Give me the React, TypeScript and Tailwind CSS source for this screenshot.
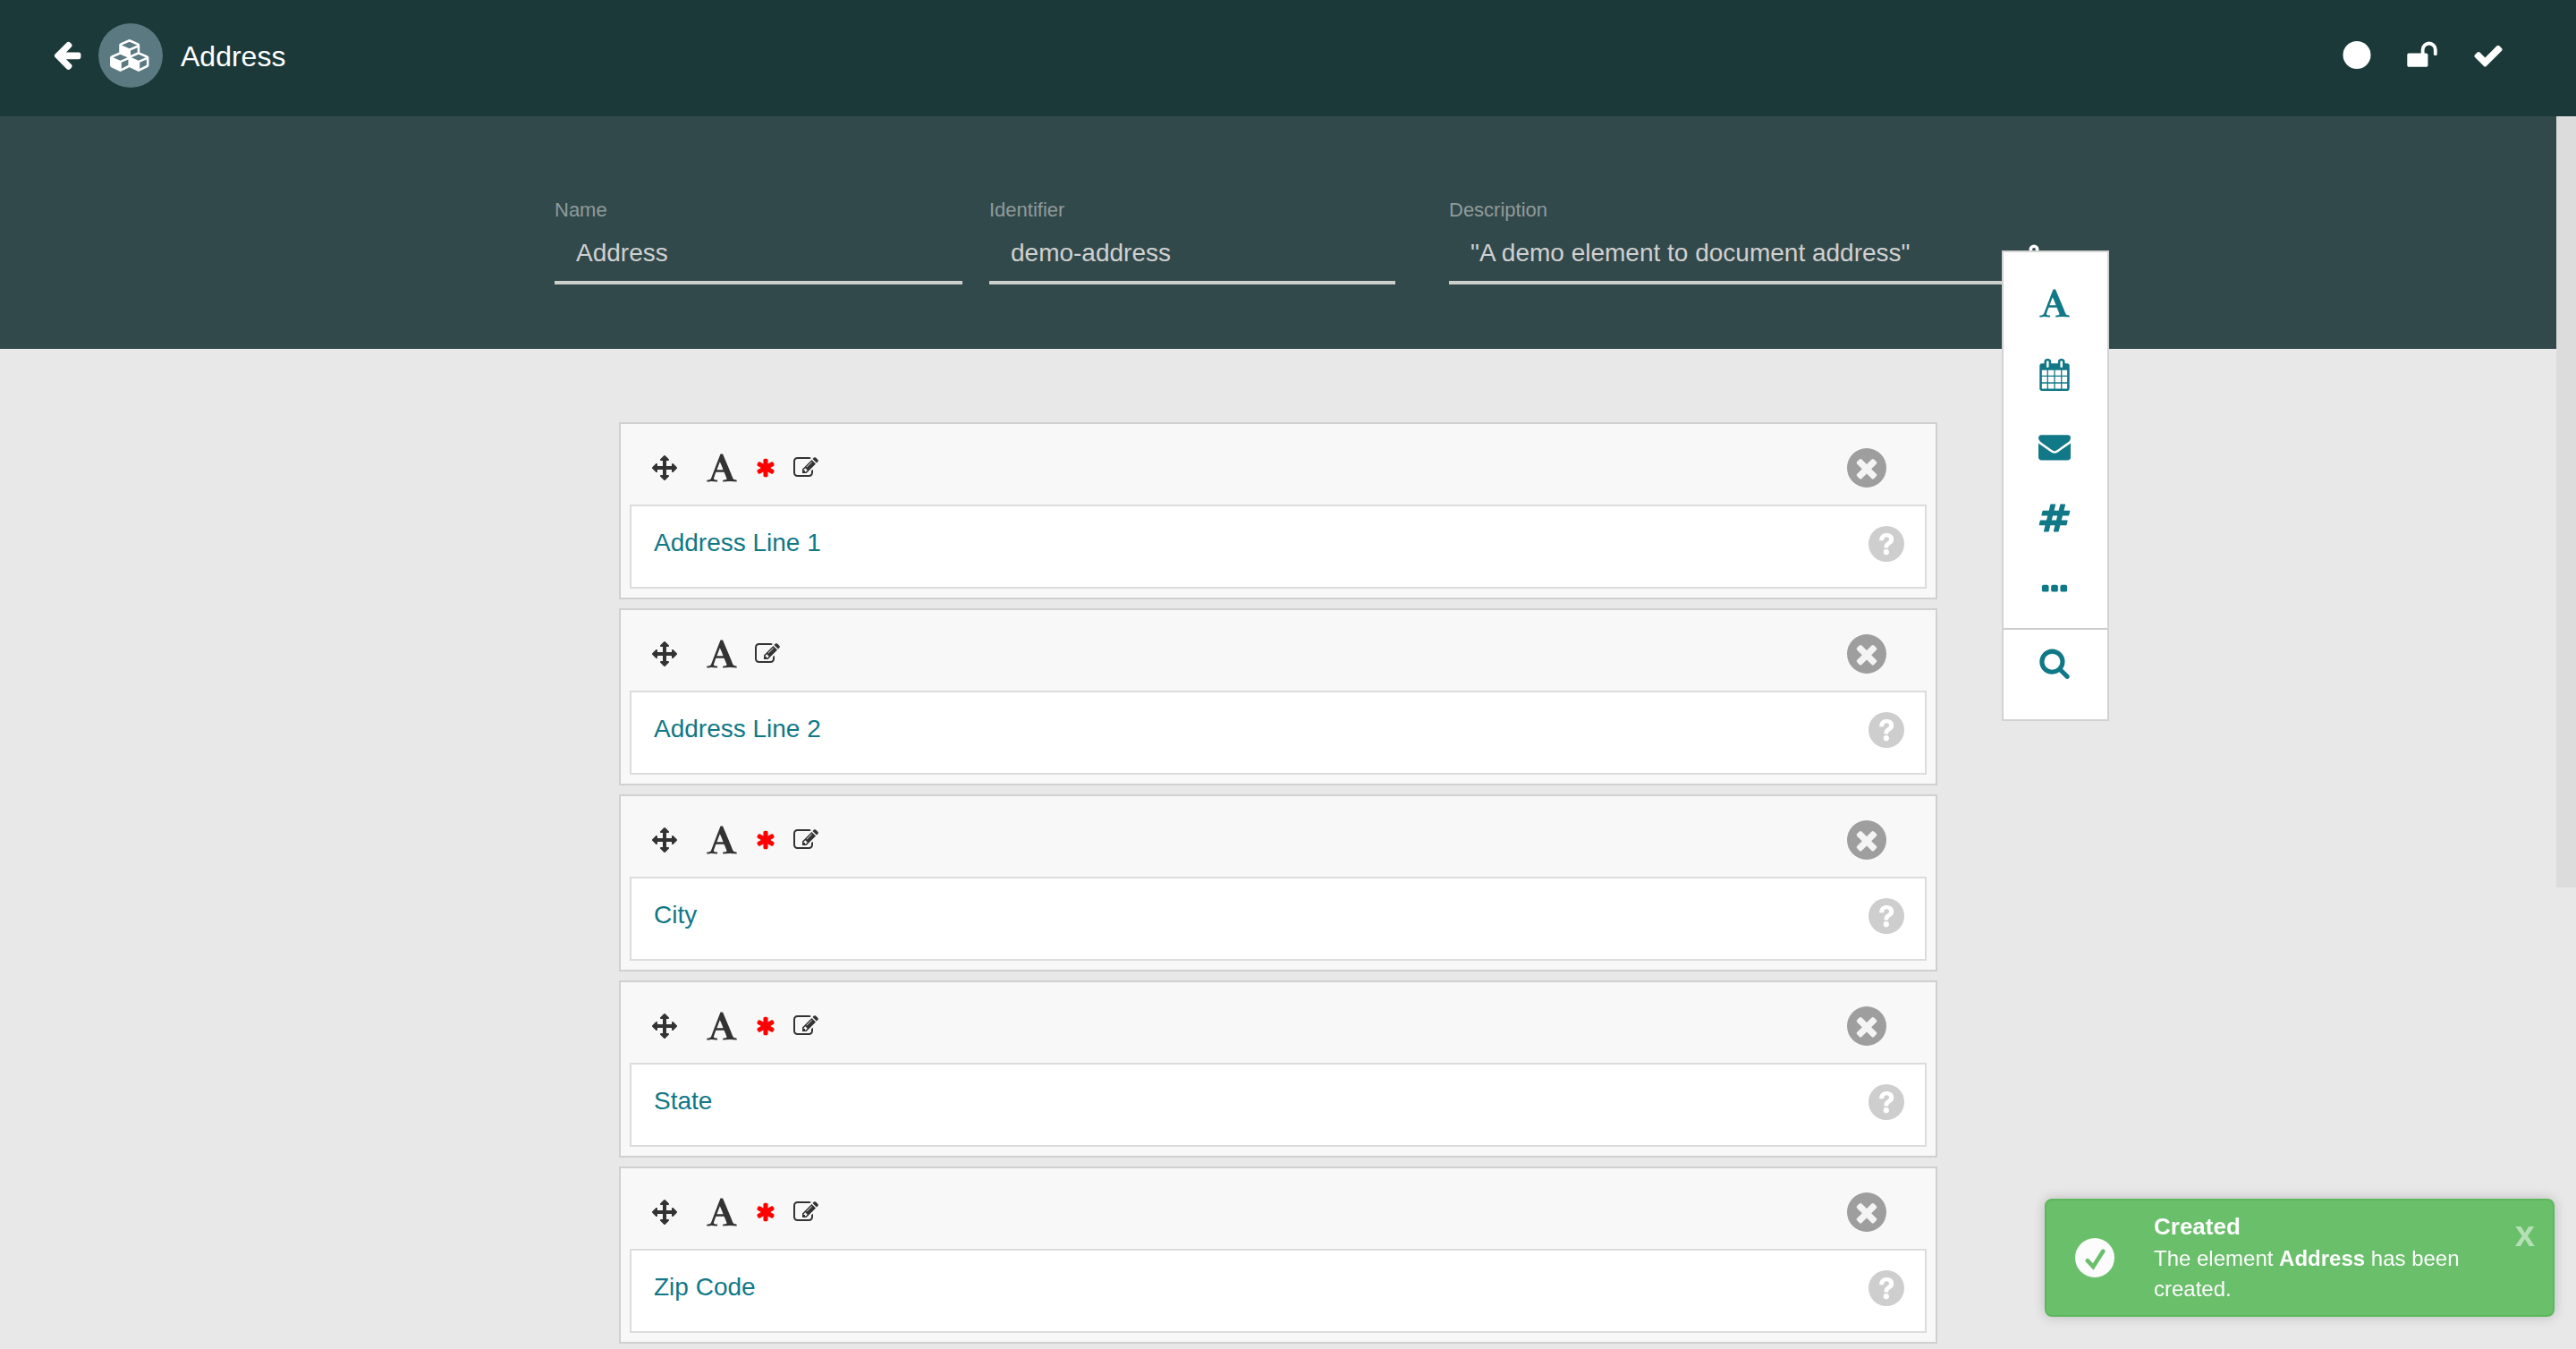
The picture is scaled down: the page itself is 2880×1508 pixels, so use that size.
import type { ReactNode } from 'react';

type GlyphName =
  | 'arrowLeft'
  | 'unlock'
  | 'check'
  | 'font'
  | 'calendar'
  | 'envelope'
  | 'hashtag'
  | 'ellipsis'
  | 'search'
  | 'arrows'
  | 'asterisk'
  | 'edit'
  | 'times';

const glyphs: Record<GlyphName, string> = {
  arrowLeft:
    'M1664 896v128q0 53-32.5 90.5t-84.5 37.5h-704l293 294q38 36 38 90t-38 90l-75 76q-37 37-90 37-52 0-91-37l-651-652q-37-37-37-90 0-52 37-91l651-650q38-38 91-38 52 0 90 38l75 74q38 38 38 91t-38 91l-293 293h704q52 0 84.5 37.5t32.5 90.5z',
  unlock:
    'M1728 576v256q0 26-19 45t-45 19h-64q-26 0-45-19t-19-45v-256q0-106-75-181t-181-75-181 75-75 181v192h96q40 0 68 28t28 68v576q0 40-28 68t-68 28h-960q-40 0-68-28t-28-68v-576q0-40 28-68t68-28h672v-192q0-185 131.5-316.5t316.5-131.5 316.5 131.5 131.5 316.5z',
  check:
    'M1671 566q0 40-28 68l-724 724-136 136q-28 28-68 28t-68-28l-136-136-362-362q-28-28-28-68t28-68l136-136q28-28 68-28t68 28l294 295 656-657q28-28 68-28t68 28l136 136q28 28 28 68z',
  font: 'M789 559l-170 450q33 0 136.5 2t160.5 2q19 0 57-2-87-253-184-452zm-725 1105l2-79q23-7 56-12.5t57-10.5 49.5-14.5 44.5-29 31-50.5l237-616 280-724h128q8 14 11 21l205 480q33 78 106 257.5t114 274.5q15 34 58 144.5t72 168.5q20 45 35 57 19 15 88 29.5t84 20.5q6 38 6 57 0 5-.5 13.5t-.5 12.5q-63 0-190-8t-191-8q-76 0-215 7t-178 8q0-43 4-78l131-28q1 0 12.5-2.5t15.5-3.5 14.5-4.5 15-6.5 11-8 9-11 2.5-14q0-16-31-96.5t-72-177.5-42-100l-450-2q-26 58-76.5 195.5t-50.5 162.5q0 22 14 37.5t43.5 24.5 48.5 13.5 57 8.5 41 4q1 19 1 58 0 9-2 27-58 0-174.5-10t-174.5-10q-8 0-26.5 4t-21.5 4q-80 14-188 14z',
  calendar:
    'M192 1664h288v-288h-288v288zm352 0h320v-288h-320v288zm-352-352h288v-320h-288v320zm352 0h320v-320h-320v320zm-352-384h288v-288h-288v288zm736 736h320v-288h-320v288zm-384-736h320v-288h-320v288zm768 736h288v-288h-288v288zm-384-352h320v-320h-320v320zm-352-864v-288q0-13-9.5-22.5t-22.5-9.5h-64q-13 0-22.5 9.5t-9.5 22.5v288q0 13 9.500 22.500t22.500 9.500h64q13 0 22.500-9.500t9.500-22.500zm736 864h288v-320h-288v320zm-384-384h320v-288h-320v288zm384 0h288v-288h-288v288zm32-480v-288q0-13-9.500-22.500t-22.500-9.500h-64q-13 0-22.500 9.500t-9.500 22.500v288q0 13 9.500 22.500t22.500 9.500h64q13 0 22.500-9.500t9.500-22.500zm384-64v1280q0 52-38 90t-90 38h-1408q-52 0-90-38t-38-90v-1280q0-52 38-90t90-38h128v-96q0-66 47-113t113-47h64q66 0 113 47t47 113v96h384v-96q0-66 47-113t113-47h64q66 0 113 47t47 113v96h128q52 0 90 38t38 90z',
  envelope:
    'M1792 710v794q0 66-47 113t-113 47h-1472q-66 0-113-47t-47-113v-794q44 49 101 87 362 246 497 345 57 42 92.5 65.5t94.5 48 110 24.5h2q51 0 110-24.5t94.5-48 92.5-65.5q170-123 498-345 57-39 100-87zm0-294q0 79-49 151t-122 123q-376 261-468 325-10 7-42.5 31t-54 38.5-52 32.5-57.5 27-50 9h-2q-23 0-50-9t-57.5-27-52-32.5-54-38.5-42.5-31q-91-64-262-182.5t-205-142.5q-62-42-117-115.5t-55-136.5q0-78 41.5-130t118.5-52h1472q65 0 112.5 47t47.5 113z',
  hashtag:
    'M991 1024l64-256h-254l-64 256h254zm768-504l-56 224q-7 24-31 24h-327l-64 256h311q15 0 25 12 10 14 6 28l-56 224q-5 24-31 24h-327l-81 328q-7 24-31 24h-224q-16 0-26-12-9-12-6-28l78-312h-254l-81 328q-7 24-31 24h-225q-15 0-25-12-9-12-6-28l78-312h-311q-15 0-25-12-9-12-6-28l56-224q7-24 31-24h327l64-256h-311q-15 0-25-12-10-14-6-28l56-224q5-24 31-24h327l81-328q7-24 32-24h224q15 0 25 12 9 12 6 28l-78 312h254l81-328q7-24 32-24h224q15 0 25 12 9 12 6 28l-78 312h311q15 0 25 12 9 12 6 28z',
  ellipsis:
    'M576 736v192q0 40-28 68t-68 28h-192q-40 0-68-28t-28-68v-192q0-40 28-68t68-28h192q40 0 68 28t28 68zm512 0v192q0 40-28 68t-68 28h-192q-40 0-68-28t-28-68v-192q0-40 28-68t68-28h192q40 0 68 28t28 68zm512 0v192q0 40-28 68t-68 28h-192q-40 0-68-28t-28-68v-192q0-40 28-68t68-28h192q40 0 68 28t28 68z',
  search:
    'M1216 832q0-185-131.5-316.5t-316.5-131.5-316.5 131.5-131.5 316.5 131.5 316.5 316.5 131.5 316.5-131.5 131.5-316.5zm512 832q0 52-38 90t-90 38q-54 0-90-38l-343-342q-179 124-399 124-143 0-273.5-55.5t-225-150-150-225-55.5-273.5 55.5-273.5 150-225 225-150 273.5-55.5 273.5 55.5 225 150 150 225 55.5 273.5q0 220-124 399l343 343q37 37 37 90z',
  arrows:
    'M1792 896q0 26-19 45l-256 256q-19 19-45 19t-45-19-19-45v-128h-384v384h128q26 0 45 19t19 45-19 45l-256 256q-19 19-45 19t-45-19l-256-256q-19-19-19-45t19-45 45-19h128v-384h-384v128q0 26-19 45t-45 19-45-19l-256-256q-19-19-19-45t19-45l256-256q19-19 45-19t45 19 19 45v128h384v-384h-128q-26 0-45-19t-19-45 19-45l256-256q19-19 45-19t45 19l256 256q19 19 19 45t-19 45-45 19h-128v384h384v-128q0-26 19-45t45-19 45 19l256 256q19 19 19 45z',
  asterisk:
    'M1546 1050q46 26 59.5 77.5t-12.5 97.5l-64 110q-26 46-77.5 59.5t-97.5-12.5l-266-153v307q0 52-38 90t-90 38h-128q-52 0-90-38t-38-90v-307l-266 153q-46 26-97.5 12.5t-77.5-59.5l-64-110q-26-46-12.5-97.5t59.5-77.5l266-154-266-154q-46-26-59.5-77.5t12.5-97.5l64-110q26-46 77.5-59.5t97.5 12.5l266 153v-307q0-52 38-90t90-38h128q52 0 90 38t38 90v307l266-153q46-26 97.5-12.5t77.5 59.5l64 110q26 46 12.5 97.5t-59.5 77.5l-266 154z',
  edit: 'M888 1184l116-116-152-152-116 116v56h96v96h56zm440-720q-16-16-33 1l-350 350q-17 17-1 33t33-1l350-350q17-17 1-33zm80 594v190q0 119-84.5 203.5t-203.5 84.5h-832q-119 0-203.5-84.5t-84.5-203.5v-832q0-119 84.5-203.5t203.5-84.5h832q63 0 117 25 15 7 18 23 3 17-9 29l-49 49q-14 14-32 8-23-6-45-6h-832q-66 0-113 47t-47 113v832q0 66 47 113t113 47h832q66 0 113-47t47-113v-126q0-13 9-22l64-64q15-15 35-7t20 29zm-96-738l288 288-672 672h-288v-288zm444 132l-92 92-288-288 92-92q28-28 68-28t68 28l152 152q28 28 28 68t-28 68z',
  times:
    'M1490 1322q0 40-28 68l-136 136q-28 28-68 28t-68-28l-294-294-294 294q-28 28-68 28t-68-28l-136-136q-28-28-28-68t28-68l294-294-294-294q-28-28-28-68t28-68l136-136q28-28 68-28t68 28l294 294 294-294q28-28 68-28t68 28l136 136q28 28 28 68t-28 68l-294 294 294 294q28 28 28 68z',
};

function Glyph({ name, className }: { name: GlyphName; className: string }) {
  return (
    <svg viewBox="0 0 1792 1792" fill="currentColor" aria-hidden="true" className={className}>
      <path d={glyphs[name]} />
    </svg>
  );
}

function CubesIcon() {
  return (
    <svg viewBox="0 0 2304 1792" fill="currentColor" aria-hidden="true" className="h-9 w-[46px]">
      <path d="M640 1632l384-192v-314l-384 164v342zm-64-454l404-173-404-173-404 173zm1088 454l384-192v-314l-384 164v342zm-64-454l404-173-404-173-404 173zm-448-293l384-165v-266l-384 164v267zm-64-379l441-189-441-189-441 189zm1088 518v416q0 36-19 67t-52 47l-448 224q-25 14-57 14t-57-14l-448-224q-4-2-7-4-2 2-7 4l-448 224q-25 14-57 14t-57-14l-448-224q-33-16-52-47t-19-67v-416q0-38 21.5-70t56.5-48l434-186v-400q0-38 21.5-70t56.5-48l448-192q23-10 50-10t50 10l448 192q35 16 56.5 48t21.5 70v400l434 186q36 16 57 48t21 70z" />
    </svg>
  );
}

function IconButton({ label, className = '', children }: { label: string; className?: string; children: ReactNode }) {
  return (
    <button type="button" aria-label={label} className={`flex shrink-0 items-center justify-center ${className}`}>
      {children}
    </button>
  );
}

function Header() {
  return (
    <header className="flex h-[130px] items-center bg-[#1b3939] pr-20 pb-1.5 pl-[57px] text-white">
      <IconButton label="Back" className="pb-0.5">
        <Glyph name="arrowLeft" className="size-9" />
      </IconButton>
      <div className="ml-[17px] flex size-[72px] items-center justify-center rounded-full bg-[#5a7980]">
        <CubesIcon />
      </div>
      <h1 className="ml-5 pt-0.5 text-[32px] leading-10">Address</h1>
      <div className="ml-auto flex items-center gap-[38px]">
        <IconButton label="Status">
          <svg viewBox="0 0 36 36" fill="currentColor" aria-hidden="true" className="size-9">
            <circle cx="19" cy="17.5" r="15.5" />
          </svg>
        </IconButton>
        <IconButton label="Unlock">
          <Glyph name="unlock" className="size-9" />
        </IconButton>
        <IconButton label="Save">
          <Glyph name="check" className="size-9" />
        </IconButton>
      </div>
    </header>
  );
}

function Field({ id, label, value, className = '' }: { id: string; label: string; value: string; className?: string }) {
  return (
    <div className={`flex flex-col ${className}`}>
      <label htmlFor={id} className="text-[22px] leading-[34px] text-[#8f9b9b]">
        {label}
      </label>
      <input
        id={id}
        type="text"
        defaultValue={value}
        className="h-[66px] w-full border-b-4 border-[#cdcfcb] bg-transparent px-6 text-[28px] text-[#d0d0d0] outline-none"
      />
    </div>
  );
}

const tools: { name: GlyphName; label: string }[] = [
  { name: 'font', label: 'Text field' },
  { name: 'calendar', label: 'Date field' },
  { name: 'envelope', label: 'Email field' },
  { name: 'hashtag', label: 'Number field' },
  { name: 'ellipsis', label: 'More fields' },
];

function Toolbox() {
  return (
    <aside className="absolute top-[150px] left-full z-10 w-[120px] border-2 border-[#d2d2d2] bg-white text-[#107886]">
      <div className="flex flex-col border-b-2 border-[#cccccc] pt-[17px] pb-[3px]">
        {tools.map((tool) => (
          <IconButton key={tool.name} label={tool.label} className="h-20 pr-0.5">
            <Glyph name={tool.name} className="size-9" />
          </IconButton>
        ))}
      </div>
      <IconButton label="Search" className="h-[100px] w-full pr-0.5 pb-[26px]">
        <Glyph name="search" className="size-9" />
      </IconButton>
    </aside>
  );
}

function DetailsForm() {
  return (
    <section className="h-[260px] bg-[#32494b] pt-[88px] text-white">
      <div className="mx-auto grid w-full max-w-[1618px] grid-cols-[486fr_514fr_618fr]">
        <Field id="name" label="Name" value="Address" className="mr-[30px]" />
        <Field id="identifier" label="Identifier" value="demo-address" className="mr-[60px]" />
        <Field id="description" label="Description" value={'"A demo element to document address"'} />
      </div>
    </section>
  );
}

const elements = [
  { title: 'Address Line 1', required: true },
  { title: 'Address Line 2', required: false },
  { title: 'City', required: true },
  { title: 'State', required: true },
  { title: 'Zip Code', required: true },
];

function ElementCard({ title, required }: { title: string; required: boolean }) {
  return (
    <li className="border-2 border-[#d0d0d0] bg-[#f8f8f8] px-2.5 pb-2.5">
      <div className="flex h-[90px] items-center pt-2 pr-[45px] pl-[25px] text-[#333333]">
        <IconButton label={`Move ${title}`}>
          <Glyph name="arrows" className="size-7" />
        </IconButton>
        <div className="ml-8 flex items-center gap-[19px]">
          <Glyph name="font" className="size-9" />
          {required && <Glyph name="asterisk" className="size-6 text-[#ff0000]" />}
          <IconButton label={`Edit ${title}`}>
            <Glyph name="edit" className="size-7" />
          </IconButton>
        </div>
        <IconButton label={`Remove ${title}`} className="ml-auto size-11 rounded-full bg-[#9e9e9e] text-[#f4f4f4]">
          <Glyph name="times" className="size-[34px]" />
        </IconButton>
      </div>
      <div className="flex h-[94px] items-start justify-between border-2 border-[#dcdcdc] bg-white pt-[22px] pr-[23px] pl-[25px]">
        <h2 className="text-[28px] leading-[38px] text-[#107886]">{title}</h2>
        <IconButton label={`Help for ${title}`} className="text-[#cecece]">
          <svg viewBox="0 0 40 40" aria-hidden="true" className="size-10">
            <circle cx="20" cy="20" r="20" fill="currentColor" />
            <path
              d="M12.100 16.200C12.200 11 15.300 8 20.100 8c4.900 0 8.100 2.700 8.100 6.900 0 2.700-1.300 4.400-3.600 5.900-2 1.300-2.500 2-2.500 3.600h-4.600v-.8c0-2.700.9-4.200 3.200-5.800 1.800-1.200 2.400-1.800 2.400-3 0-1.600-1.200-2.600-2.900-2.600-1.900 0-3 1.300-3.200 4z"
              fill="white"
            />
            <circle cx="19.800" cy="29.200" r="3.100" fill="white" />
          </svg>
        </IconButton>
      </div>
    </li>
  );
}

function Toast() {
  return (
    <div
      role="status"
      className="fixed right-6 bottom-9 z-20 flex h-[132px] w-[570px] items-center rounded-lg border-2 border-[#5cb85c] bg-[#6abf6b] pr-5 pl-8 text-[#fcfcfc] shadow-[0_0_14px_rgba(0,0,0,0.2)]"
    >
      <svg viewBox="0 0 44 44" aria-hidden="true" className="size-11 shrink-0">
        <circle cx="22" cy="22" r="22" fill="currentColor" />
        <path
          d="M13.800 25.200l6.400 6.800L31.400 14.600"
          fill="none"
          stroke="#6abf6b"
          strokeWidth="4.600"
          strokeLinecap="round"
          strokeLinejoin="miter"
        />
      </svg>
      <div className="ml-11 flex-1 pb-0.5">
        <strong className="block text-[26px] leading-[38px]">Created</strong>
        <p className="w-[360px] text-[24px] leading-[34px]">
          The element <strong>Address</strong> has been created.
        </p>
      </div>
      <button
        type="button"
        aria-label="Close"
        className="mt-[15px] self-start text-[40px] leading-[44px] font-bold text-white/50"
      >
        x
      </button>
    </div>
  );
}

export default function App() {
  return (
    <div className="min-h-screen overflow-hidden bg-[#e8e8e8] font-['Liberation_Sans',Arial,sans-serif]">
      <Header />
      <div className="flex items-start">
        <div className="relative min-w-0 flex-1">
          <div className="absolute inset-x-0 top-0 z-10 mx-auto h-0 max-w-[1618px]">
            <svg viewBox="0 0 12 12" aria-hidden="true" className="absolute top-[143px] left-full ml-[30px] size-3">
              <circle cx="6" cy="6" r="3.700" fill="none" stroke="white" strokeWidth="3.600" />
            </svg>
            <Toolbox />
          </div>
          <DetailsForm />
          <main className="px-6 pt-[82px] pb-1.5">
            <ul className="mx-auto flex max-w-[1474px] flex-col gap-2.5">
              {elements.map((element) => (
                <ElementCard key={element.title} title={element.title} required={element.required} />
              ))}
            </ul>
          </main>
        </div>
        <div className="h-[862px] w-[22px] shrink-0 bg-[#dcdcdc]" />
      </div>
      <Toast />
    </div>
  );
}
